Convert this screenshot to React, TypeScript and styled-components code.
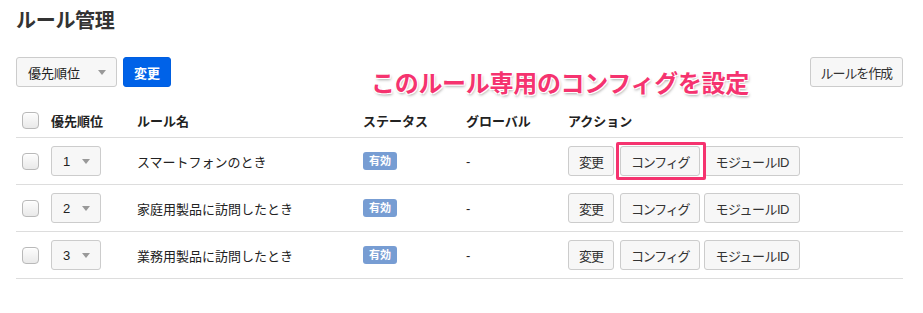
import styled, { createGlobalStyle } from 'styled-components'

const GlobalStyle = createGlobalStyle`
  body {
    margin: 0;
    background: #fff;
    font-family: "Liberation Sans", "Noto Sans CJK JP", sans-serif;
    color: #333;
  }
`

const Page = styled.div`
  position: relative;
  padding: 9px 20px 0 16px;
`

const Title = styled.h1`
  margin: 0;
  font-size: 20px;
  line-height: 24px;
  font-weight: bold;
  color: #333;
  letter-spacing: -0.3px;
`

const Toolbar = styled.div`
  display: flex;
  align-items: center;
  gap: 6px;
  margin-top: 24px;
  height: 30px;
`

const Spacer = styled.div`
  flex: 1;
`

const SelectBox = styled.div<{ $width: number }>`
  box-sizing: border-box;
  display: flex;
  align-items: center;
  justify-content: space-between;
  width: ${p => p.$width}px;
  height: 30px;
  padding: 0 10px 0 11px;
  background: #f7f7f7;
  border: 1px solid #ccc;
  border-radius: 3px;
  font-size: 13px;
  color: #222;
`

const Caret = styled.span`
  width: 0;
  height: 0;
  border-left: 4px solid transparent;
  border-right: 4px solid transparent;
  border-top: 5px solid #999;
`

const Button = styled.button<{ $primary?: boolean; $tight?: number }>`
  box-sizing: border-box;
  height: 30px;
  padding: 0 10px;
  border-radius: 3px;
  font-family: inherit;
  font-size: 13px;
  letter-spacing: ${p => (p.$tight ? `-${p.$tight}px` : 'normal')};
  border: 1px solid ${p => (p.$primary ? '#005ee0' : '#ccc')};
  background: ${p => (p.$primary ? '#0062e8' : '#f7f7f7')};
  color: ${p => (p.$primary ? '#fff' : '#333')};
  font-weight: ${p => (p.$primary ? 'bold' : 'normal')};
  cursor: pointer;
`

const ConfigButton = styled(Button)`
  margin-left: 2px;
`

const Annotation = styled.div`
  position: absolute;
  left: 371px;
  top: 64px;
  font-size: 24px;
  font-weight: bold;
  color: #f5336f;
  letter-spacing: -0.3px;
  text-shadow:
    -1px -1px 0 #fff, 1px -1px 0 #fff, -1px 1px 0 #fff, 1px 1px 0 #fff,
    1px 2px 3px rgba(0, 0, 0, 0.35);
`

const Table = styled.table`
  margin-top: 17px;
  width: 887px;
  border-collapse: collapse;
  table-layout: fixed;
`

const HeadCell = styled.th<{ $width?: number }>`
  width: ${p => (p.$width ? `${p.$width}px` : 'auto')};
  height: 33px;
  padding: 0;
  text-align: left;
  font-size: 13px;
  font-weight: bold;
  color: #222;
  border-bottom: 1px solid #ddd;
`

const Cell = styled.td`
  height: 46px;
  padding: 0;
  font-size: 13px;
  color: #222;
  border-bottom: 1px solid #ddd;
`

const Check = styled.span`
  display: block;
  box-sizing: border-box;
  width: 17px;
  height: 17px;
  margin-left: 6px;
  border: 1px solid #b9b9b9;
  border-radius: 4px;
  background: linear-gradient(#fdfdfd, #e9e9e9);
  box-shadow: inset 0 1px 0 #fff;
`

const Badge = styled.span`
  display: inline-block;
  padding: 0 6px;
  height: 18px;
  line-height: 18px;
  border-radius: 3px;
  background: #779dd3;
  color: #fff;
  font-size: 11px;
  font-weight: bold;
`

const Actions = styled.div`
  display: flex;
  align-items: center;
  gap: 4px;
`

const Highlight = styled.div`
  display: flex;
  margin: 0 -6px 0 -2px;
  padding: 1px 3px 1px 1px;
  border: 3px solid #f5336f;
  border-radius: 2px;
  position: relative;
  z-index: 1;
`

const rules = [
  { order: 1, name: 'スマートフォンのとき', highlight: true },
  { order: 2, name: '家庭用製品に訪問したとき', highlight: false },
  { order: 3, name: '業務用製品に訪問したとき', highlight: false },
]

const App: React.FC = () => {
  return (
    <Page>
      <GlobalStyle />
      <Title>ルール管理</Title>
      <Toolbar>
        <SelectBox $width={101}>
          優先順位<Caret />
        </SelectBox>
        <Button $primary>変更</Button>
        <Spacer />
        <Button $tight={1.1}>ルールを作成</Button>
      </Toolbar>
      <Annotation>このルール専用のコンフィグを設定</Annotation>
      <Table>
        <thead>
          <tr>
            <HeadCell $width={35}><Check /></HeadCell>
            <HeadCell $width={86}>優先順位</HeadCell>
            <HeadCell $width={226}>ルール名</HeadCell>
            <HeadCell $width={103}>ステータス</HeadCell>
            <HeadCell $width={102}>グローバル</HeadCell>
            <HeadCell>アクション</HeadCell>
          </tr>
        </thead>
        <tbody>
          {rules.map(rule => (
            <tr key={rule.order}>
              <Cell><Check /></Cell>
              <Cell>
                <SelectBox $width={50}>
                  {rule.order}<Caret />
                </SelectBox>
              </Cell>
              <Cell>{rule.name}</Cell>
              <Cell><Badge>有効</Badge></Cell>
              <Cell>-</Cell>
              <Cell>
                <Actions>
                  <Button $tight={1}>変更</Button>
                  {rule.highlight ? (
                    <Highlight><Button $tight={1.2}>コンフィグ</Button></Highlight>
                  ) : (
                    <ConfigButton $tight={1.2}>コンフィグ</ConfigButton>
                  )}
                  <Button $tight={0.5}>モジュールID</Button>
                </Actions>
              </Cell>
            </tr>
          ))}
        </tbody>
      </Table>
    </Page>
  )
}

export default App
